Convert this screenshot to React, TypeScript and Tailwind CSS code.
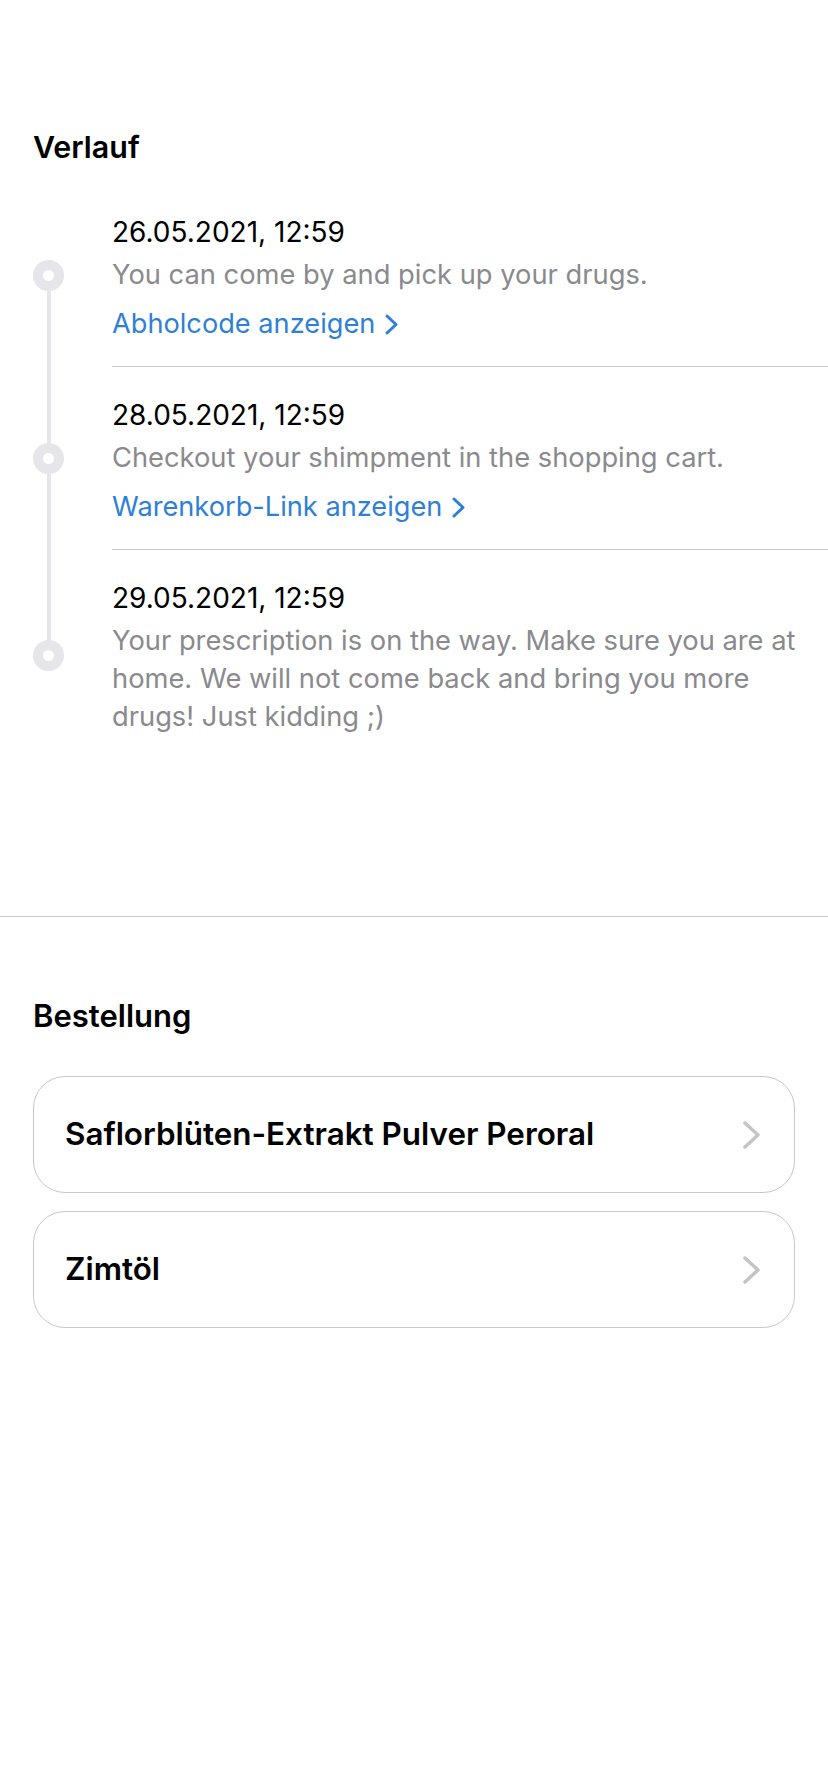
import React from "react";

type Step = {
  date: string;
  text: string;
  link?: string;
};

const steps: Step[] = [
  {
    date: "26.05.2021, 12:59",
    text: "You can come by and pick up your drugs.",
    link: "Abholcode anzeigen",
  },
  {
    date: "28.05.2021, 12:59",
    text: "Checkout your shimpment in the shopping cart.",
    link: "Warenkorb-Link anzeigen",
  },
  {
    date: "29.05.2021, 12:59",
    text: "Your prescription is on the way. Make sure you are at home. We will not come back and bring you more drugs! Just kidding ;)",
  },
];

const items = ["Saflorblüten-Extrakt Pulver Peroral", "Zimtöl"];

const LinkChevron = () => (
  <svg width="15" height="23" viewBox="0 0 15 23" fill="none" className="ml-[9px]">
    <path d="M3 3 L12 11.5 L3 20" stroke="#2f7fd6" strokeWidth="3" strokeLinecap="round" strokeLinejoin="round" />
  </svg>
);

const CardChevron = () => (
  <svg width="20" height="28" viewBox="0 0 20 28" fill="none">
    <path d="M3 2 L16 14 L3 26" stroke="#c4c4c7" strokeWidth="3.5" strokeLinecap="round" strokeLinejoin="round" />
  </svg>
);

const TimelineItem = ({ step, first, last }: { step: Step; first: boolean; last: boolean }) => (
  <div className="flex">
    {/* dot + line */}
    <div className="w-[79px] shrink-0">
      <div className="flex h-full w-[31px] flex-col items-center">
        <div className={"w-[4px] flex-1 " + (first ? "bg-transparent" : "bg-[#e5e5ea]")} />
        <div className="flex h-[31px] w-[31px] items-center justify-center rounded-full bg-[#e5e5ea]">
          <div className="h-[11px] w-[11px] rounded-full bg-white" />
        </div>
        <div className={"w-[4px] flex-1 " + (last ? "bg-transparent" : "bg-[#e5e5ea]")} />
      </div>
    </div>

    <div className={"flex-1 pt-[31px] pb-[25px] pr-[16px] " + (last ? "" : "border-b border-[#c8c8cc]")}>
      <div className="text-[28px] leading-[34px] text-black">{step.date}</div>
      <p className="mt-[7px] text-[27.3px] leading-[38px] text-[#8a8a8e]">{step.text}</p>
      {step.link && (
        <div className="mt-[13px] flex items-center text-[27.2px] leading-[34px] text-[#2f7fd6]">
          <span>{step.link}</span>
          <LinkChevron />
        </div>
      )}
    </div>
  </div>
);

export default function App() {
  return (
    <div className="min-h-[1792px] bg-white font-['Inter','Noto_Sans',sans-serif] text-black">
      {/* Verlauf */}
      <section className="pl-[33px] pt-[128px]">
        <h2 className="text-[30.4px] font-semibold leading-[38px]">Verlauf</h2>
        <div className="mt-[18px]">
          {steps.map((s, i) => (
            <TimelineItem key={s.date} step={s} first={i === 0} last={i === steps.length - 1} />
          ))}
        </div>
      </section>

      <div className="mt-[155px] h-px bg-[#c8c8cc]" />

      {/* Bestellung */}
      <section className="px-[33px] pt-[81px]">
        <h2 className="text-[31px] font-semibold leading-[36px]">Bestellung</h2>
        <div className="mt-[42px] flex flex-col gap-[18px]">
          {items.map((name) => (
            <div
              key={name}
              className="flex h-[117px] items-center justify-between rounded-[32px] border border-[#c8c8cc] pl-[31px] pr-[32px]"
            >
              <span className="text-[31.4px] font-semibold">{name}</span>
              <CardChevron />
            </div>
          ))}
        </div>
      </section>
    </div>
  );
}
